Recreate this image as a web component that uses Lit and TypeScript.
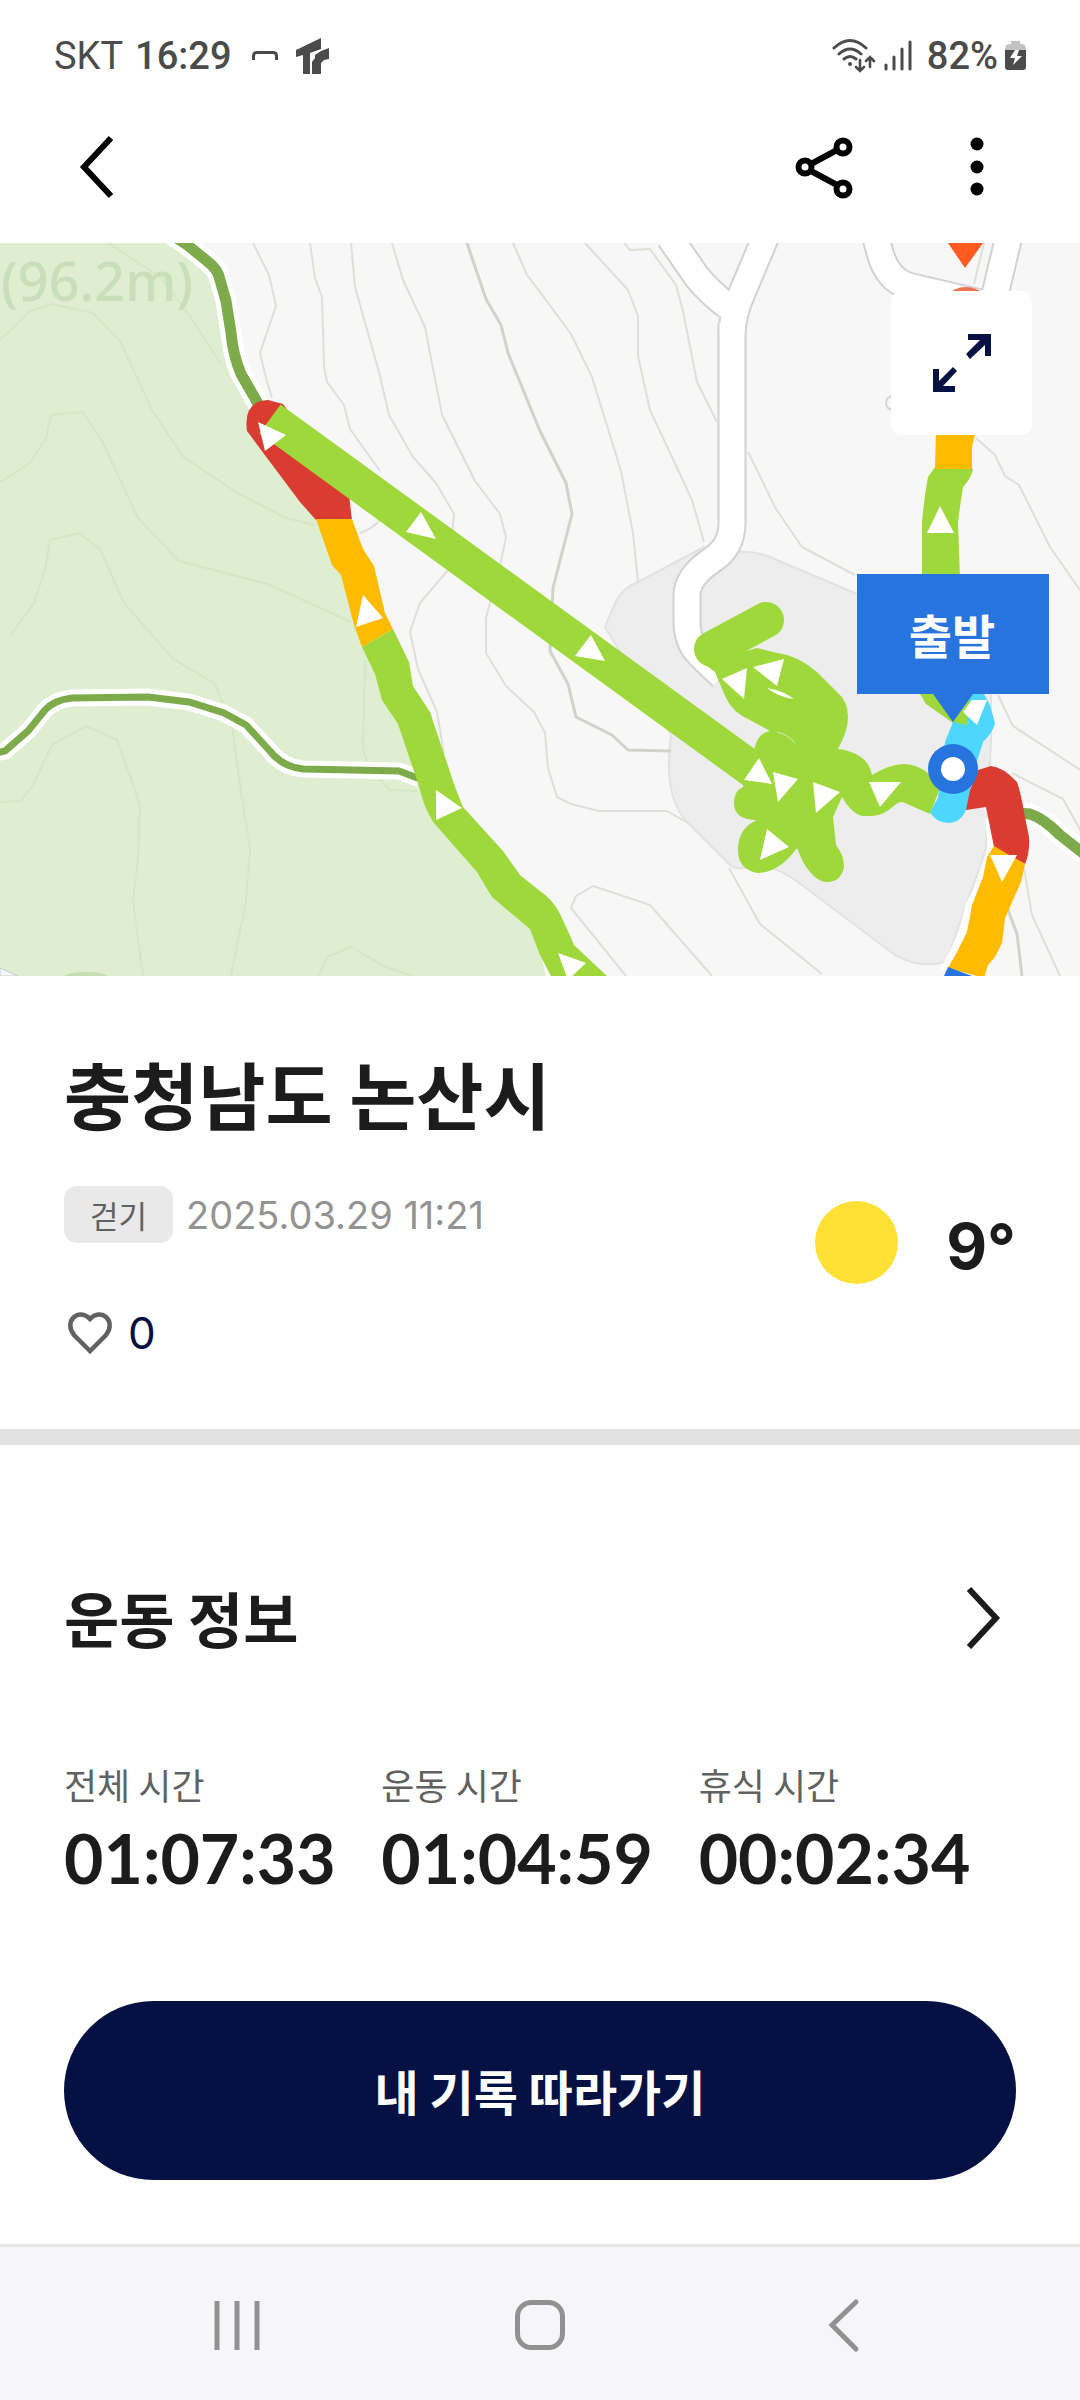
import { LitElement, html, svg, css } from "lit";
import { customElement, property } from "lit/decorators.js";

const FOREST_LINES = [
  "M0 97L21 77L29 68L52 61L93 70L120 98L152 167L183 214L241 252L286 275L315 282",
  "M0 239L29 221L46 195L51 172L83 169L103 200L138 275L179 318L268 341L351 379",
  "M10 393L34 360L45 327L50 297L79 290L100 306L124 360L172 415L215 441L232 483L241 549L250 606L246 658L231 733",
  "M0 559L21 558L34 540L52 502L86 483L117 497L134 544L140 563L138 615L133 658L143 733",
  "M319 733L327 714L351 704L386 724L413 733",
  "M365 417L363 507L368 521L389 547L417 548",
  "M108 0L160 34L190 73L220 120",
];

const CONTOUR_LINES = [
  "M253 0L269 32L276 63L260 110L267 139L272 155",
  "M310 0L315 35L322 54L324 124L327 139L344 162L350 186L380 228",
  "M351 0L355 44L379 129L389 172L413 214L436 240L454 271L448 327L420 360L410 389L418 426L437 469L444 511",
  "M360 290Q372 286 379 278",
  "M392 0L403 37L425 84L442 172L475 238L500 271L506 294L501 318L486 375L486 410L506 443L534 469L545 490L548 525L557 554L571 561L599 568L667 568L688 580",
  "M513 0L527 32L540 49L571 91L592 134L621 228L633 290L638 339",
  "M585 0L628 47L638 73L638 113L650 167L692 257L704 299",
  "M624 0L630 7L650 6L676 42L683 68L697 139L717 179",
  "M748 209L776 266L802 304L855 332",
  "M976 195L995 212L1005 233L1019 242L1050 304L1082 350",
  "M998 452L1013 483L1082 528",
  "M1012 530L1063 556L1082 590",
  "M729 625L760 681L822 731",
  "M626 733L571 665L576 653L593 643L650 662L712 733",
  "M1024 625L1032 672L1060 733",
  "M984 0L974 41",
];

const INDEX_LINES = [
  "M467 0L486 56L501 82L508 110L540 188L566 240L572 271L553 345L550 408L568 441L576 474L612 492L628 507L671 508",
  "M1008 667L1017 691L1022 733",
];

const STREETS = [
  "M670 -5L697 34Q710 50 730 65",
  "M766 -7L742 50Q733 70 732 90",
  "M732 80V280Q732 304 712 317Q687 334 687 352V379Q687 394 694 405Q702 415 722 433",
  "M876 -5L879 6Q886 36 908 43L985 61",
  "M1009 -7L993 60",
];

const TRAILS = [
  { d: "M172 -8L186 1L207 18Q218 26 220 37L226 58L231 90Q233 112 241 131L260 164", width: 11 },
  { d: "M-4 510L5 508L28 488L45 467Q54 457 72 455L148 454L189 459L224 470L246 482L269 507Q282 524 303 526L399 528L420 536", width: 7 },
  { d: "M1015 570L1030 571Q1043 575 1060 592L1084 611", width: 11 },
];

const ARROWS = [
  "258,179 286,192 265,208",
  "421,269 436,296 406,289",
  "591,392 605,418 575,413",
  "363,352 383,375 356,384",
  "436,547 462,565 436,577",
  "558,710 586,720 568,737",
  "940,263 927,290 954,290",
  "963,469 972,457 987,457 977,482",
  "990,612 1017,612 1002,639",
  "722,436 747,425 744,456",
  "753,424 784,416 777,443",
  "759,515 744,537 772,541",
  "773,529 798,536 778,559",
  "813,539 840,549 816,570",
  "869,539 901,539 880,564",
  "767,586 789,604 760,617",
];

@customElement("phone-status")
class PhoneStatus extends LitElement {
  static styles = css`
    :host {
      display: flex;
      justify-content: space-between;
      align-items: center;
      height: 68px;
      padding: 22px 54px 0 54px;
      color: #4b4b4b;
      font: 500 38px/48px Roboto, "Liberation Sans", sans-serif;
    }
    .group {
      display: flex;
      align-items: center;
    }
    .carrier {
      font-weight: 400;
      margin-right: 12px;
    }
    .note {
      width: 26px;
      height: 36px;
      margin: 0 18px 0 20px;
    }
    .brand {
      width: 34px;
      height: 36px;
    }
    .wifi {
      width: 44px;
      height: 36px;
      margin-right: 8px;
    }
    .signal {
      width: 28px;
      height: 36px;
      margin-right: 15px;
    }
    .battery {
      width: 21px;
      height: 36px;
      margin-left: 7px;
    }
  `;

  render() {
    return html`
      <div class="group">
        <span class="carrier">SKT</span>
        <span>16:29</span>
        <svg class="note" viewBox="0 0 26 36" fill="none" stroke="currentColor" stroke-width="3" aria-hidden="true">
          <path d="M1.5 22V18Q1.5 14.5 5 14.5H21Q24.5 14.5 24.5 18V22" />
        </svg>
        <svg class="brand" viewBox="0 0 34 36" fill="currentColor" aria-hidden="true">
          <path d="M0 12L25 0V11L14 15V36H7V17L0 19Z" />
          <path d="M16 36V24L19 20V17L25 13L33 10V21L28 22L25 25V36Z" />
        </svg>
      </div>
      <div class="group">
        <svg class="wifi" viewBox="0 0 44 36" fill="none" stroke="currentColor" stroke-width="3" stroke-linecap="round" aria-hidden="true">
          <path d="M2 10Q18 -5 34 10M7 16Q18 6 29 16M12 21Q18 16 24 21" />
          <circle cx="18" cy="26" r="2" fill="currentColor" stroke="none" />
          <path d="M28 22V32M24 29L28 33L32 29M38 29V19M34 23L38 19L42 23" stroke-width="2.6" />
        </svg>
        <svg class="signal" viewBox="0 0 28 36" stroke="currentColor" stroke-width="3" stroke-linecap="round" aria-hidden="true">
          <path d="M2 27V31M10 19V31M18 11V31M26 4V31" />
        </svg>
        <span>82%</span>
        <svg class="battery" viewBox="0 0 21 36" aria-hidden="true">
          <path d="M6 3H15V6H17Q21 6 21 12H0Q0 6 4 6H6Z" fill="#c2c2c2" />
          <path d="M0 12H21V29Q21 32 18 32H3Q0 32 0 29Z" fill="currentColor" />
          <path d="M10 12H14L12 18H17L8 27L10 20H5Z" fill="#fff" />
        </svg>
      </div>
    `;
  }
}

@customElement("route-map")
class RouteMap extends LitElement {
  static styles = css`
    :host {
      display: block;
      position: relative;
      overflow: hidden;
    }
    .map {
      display: block;
      width: 100%;
      height: auto;
    }
    .peak {
      font: 500 54px "Noto Sans", "Open Sans", sans-serif;
      fill: #c8dfba;
    }
    .flag {
      font: 700 47px "Noto Sans CJK KR", sans-serif;
      fill: #fff;
      text-anchor: middle;
    }
    .expand {
      position: absolute;
      top: 48px;
      right: 48px;
      display: grid;
      place-items: center;
      width: 141px;
      height: 144px;
      padding: 0;
      border: 0;
      border-radius: 11px;
      background: #fff;
      color: #051142;
    }
    .expand svg {
      width: 62px;
      height: 60px;
    }
  `;

  render() {
    return html`
      <svg class="map" viewBox="0 0 1080 733" role="img" aria-label="이동 경로 지도">
        <rect width="1080" height="733" fill="#f7f7f7" />
        <path d="M0 0H183L215 30L226 60L233 110L262 166L262 200L335 280L375 400L440 560L535 690L546 733H0Z" fill="#dfedd0" />
        <g fill="none" stroke="#d4e7c6" stroke-width="2">${FOREST_LINES.map((d) => svg`<path d=${d} />`)}</g>
        <ellipse cx="86" cy="734" rx="22" ry="5" fill="#c5dfb2" />
        <path d="M0 725L18 733H0Z" fill="#f7f7f7" stroke="#c9c9c9" />
        <text class="peak" x="1" y="58">(96.2m)</text>
        <path
          d="M704 304L638 339Q622 345 615 360L605 384L671 492Q666 530 673 554Q678 570 688 580L729 621Q734 626 742 625H768Q778 625 798 639L895 712Q919 726 946 719L986 606L991 497V400L857 351L770 314Q750 306 730 310Z"
          fill="#ededed" stroke="#e2e2e2" stroke-width="2"
        />
        <g fill="none" stroke="#dfdfd9" stroke-width="2" stroke-linejoin="round">${CONTOUR_LINES.map((d) => svg`<path d=${d} />`)}</g>
        <g fill="none" stroke="#d0d3cc" stroke-width="3" stroke-linejoin="round">${INDEX_LINES.map((d) => svg`<path d=${d} />`)}</g>
        <circle cx="893" cy="160" r="7" fill="none" stroke="#d5d5d5" stroke-width="2" />
        <g fill="none" stroke="#d2d2d2" stroke-width="29">${STREETS.map((d) => svg`<path d=${d} />`)}</g>
        <g fill="none" stroke="#fff" stroke-width="25">${STREETS.map((d) => svg`<path d=${d} />`)}</g>
        ${TRAILS.map(
          (t) => svg`
            <path d=${t.d} fill="none" stroke="#fff" stroke-width=${t.width + 10} />
            <path d=${t.d} fill="none" stroke="#7dab4b" stroke-width=${t.width} />
          `,
        )}
        <path d="M948 0H983L965 25Z" fill="#ff5a1f" />
        <circle cx="966" cy="72" r="28" fill="#ee7355" />

        <path d="M247 188Q243 158 268 157L283 161L349 252L352 277L316 277L300 259Z" fill="#da3c32" />
        <path d="M316 276H352L363 306L374 323L385 370L393 386L362 404L354 382L341 332L332 322Z" fill="#ffbb00" />
        <path
          d="M393 386L409 419L413 443L430 469L444 511L455 544L463 564L503 608L520 632L540 648Q552 656 559 669L568 688L574 702L609 735H552L540 712L530 686L492 654L477 629L434 580Q426 568 422 554L417 537L398 481L382 457L375 431L362 404Z"
          fill="#9fd83a"
        />
        <path d="M922 335V280Q924 255 928 234L935 224L973 226Q972 234 963 244Q960 262 958 280L960 335Z" fill="#9fd83a" />
        <path d="M936 188H976L972 204V226H935Z" fill="#ffbb00" />
        <path d="M270 176L757 530" stroke="#9fd83a" stroke-width="36" />
        <path d="M766 377L712 406" stroke="#9fd83a" stroke-width="36" stroke-linecap="round" />
        <path
          d="M757 405L777 410Q797 412 817 429L837 449Q848 458 848 474Q848 488 838 506Q868 510 872 532Q890 521 905 521Q928 523 940 545L930 571L905 560Q900 557 895 562Q883 573 872 573H862Q851 570 842 554L833 574L836 602Q844 612 844 624Q841 639 827 639Q815 639 803 619L797 605Q779 630 757 630Q738 626 738 607Q738 585 757 577Q734 577 734 560Q734 548 743 544L755 504Q758 490 770 488L750 477Q733 470 726 455L715 429L703 420Z"
          fill="#9fd83a"
        />
        <path d="M767 445Q782 447 794 456Q778 454 767 445Z" fill="#fff" />
        <path d="M777 489Q787 491 795 500" fill="none" stroke="#d9e9bf" stroke-width="1" />
        <path d="M920 451L926 461L953 480L960 483L967 482L976 451Z" fill="#9fd83a" />
        <path
          d="M970 451H984L990 462L995 480Q994 488 983 499L975 525L970 547Q968 580 948 580Q935 579 930 569L938 555L942 520L945 499L953 479L967 482Z"
          fill="#4dd6ff"
        />
        <path d="M989 575L991 606L984 634L969 662L963 689L944 727" fill="none" stroke="#fff" stroke-width="7" />
        <path
          d="M978 527L991 523Q1003 524 1017 539Q1021 550 1025 574L1029 594Q1030 610 1025 621L994 604L986 564L966 567L970 547Z"
          fill="#da3c32"
        />
        <path d="M994 603L1025 621L1021 639L1005 675L1002 700L995 714L988 722L984 735L948 725L957 709L967 689L972 662L983 634L987 614Z" fill="#ffbb00" />
        <path d="M948 724L972 733H944Z" fill="#2874df" />
        <g fill="#fff">${ARROWS.map((p) => svg`<polygon points=${p} />`)}</g>

        <path d="M857 331H1049V451H973L953 479L933 451H857Z" fill="#2874df" />
        <text class="flag" x="952" y="411">출발</text>
        <circle cx="953" cy="526" r="25" fill="#2874df" />
        <circle cx="953" cy="526" r="12" fill="#fff" />
      </svg>
      <button class="expand" type="button" aria-label="지도 확대">
        <svg viewBox="0 0 62 60" fill="currentColor" aria-hidden="true">
          <path d="M37 1H60V23H54V12L39 26L35 21L49 7H37Z" />
          <path d="M2 59V36H8V48L22 34L26 38L12 53H24V59Z" />
        </svg>
      </button>
    `;
  }
}

@customElement("stat-item")
class StatItem extends LitElement {
  @property() label = "";
  @property() value = "";

  static styles = css`
    :host {
      display: block;
    }
    .label {
      margin: 0;
      color: #616161;
      font: 400 36px/48px "Noto Sans CJK KR", sans-serif;
    }
    .value {
      margin: 10px 0 0;
      color: #1c1c1c;
      font: 700 68px/80px Lato, "Noto Sans CJK KR", sans-serif;
    }
  `;

  render() {
    return html`
      <p class="label">${this.label}</p>
      <p class="value">${this.value}</p>
    `;
  }
}

@customElement("app-root")
class AppRoot extends LitElement {
  static styles = css`
    :host {
      display: flex;
      flex-direction: column;
      min-height: 100vh;
      background: #fff;
      color: #1c1c1c;
      font-family: Inter, "Noto Sans CJK KR", sans-serif;
    }
    button {
      padding: 0;
      border: 0;
      background: none;
      color: inherit;
      font: inherit;
    }
    svg {
      display: block;
    }
    .appbar {
      display: flex;
      align-items: center;
      gap: 88px;
      height: 153px;
      padding: 0 72px 0 64px;
      color: #000;
    }
    .icon {
      width: 64px;
      height: 64px;
    }
    .back {
      margin-right: auto;
    }
    .summary {
      padding: 68px 64px 70px;
      border-bottom: 16px solid #e2e2e2;
    }
    .title {
      margin: 0 0 46px;
      font: 700 73px/96px "Noto Sans CJK KR", sans-serif;
    }
    .meta {
      display: flex;
      justify-content: space-between;
      align-items: flex-start;
    }
    .facts {
      display: grid;
      gap: 64px;
    }
    .tagline {
      display: flex;
      align-items: center;
      gap: 13px;
    }
    .tag {
      padding: 0 26px;
      border-radius: 13px;
      background: #e9e9e9;
      color: #616161;
      font: 400 31px/57px "Noto Sans CJK KR", sans-serif;
    }
    .date {
      color: #939393;
      font-size: 38px;
      line-height: 48px;
    }
    .like {
      display: flex;
      align-items: center;
      gap: 14px;
      justify-self: start;
      color: #051142;
      font-size: 44px;
      line-height: 52px;
    }
    .heart {
      width: 50px;
      height: 50px;
    }
    .weather {
      display: flex;
      align-items: flex-start;
      gap: 48px;
      margin-top: 15px;
      font-size: 63px;
      font-weight: 700;
      line-height: 90px;
    }
    .sun {
      width: 83px;
      height: 83px;
      border-radius: 50%;
      background: #ffe136;
    }
    .workout {
      padding: 132px 64px 64px;
    }
    .heading {
      display: flex;
      justify-content: space-between;
      align-items: center;
      margin-bottom: 103px;
    }
    .subtitle {
      margin: 0;
      font: 700 60px/80px "Noto Sans CJK KR", sans-serif;
    }
    .stats {
      display: grid;
      grid-template-columns: repeat(3, 1fr);
    }
    .follow {
      display: block;
      width: 100%;
      margin-top: 103px;
      padding: 54px 0;
      border-radius: 90px;
      background: #051142;
      color: #fff;
      font: 700 48px/71px "Noto Sans CJK KR", sans-serif;
    }
    .navbar {
      display: grid;
      grid-template-columns: repeat(3, 1fr);
      justify-items: center;
      align-items: center;
      height: 153px;
      margin-top: auto;
      padding: 0 86px;
      border-top: 3px solid #e8e8e8;
      background: #f6f6f8;
      color: #919191;
    }
  `;

  render() {
    return html`
      <phone-status></phone-status>
      <header class="appbar">
        <button class="back" type="button" aria-label="뒤로">
          <svg class="icon" viewBox="0 0 64 64" fill="none" stroke="#000" stroke-width="6"><path d="M47 3L20 32L47 61" /></svg>
        </button>
        <button type="button" aria-label="공유">
          <svg class="icon" viewBox="0 0 64 64" fill="none" stroke="#000" stroke-width="6">
            <circle cx="13" cy="32" r="6.5" />
            <circle cx="51" cy="12" r="6.5" />
            <circle cx="51" cy="54" r="6.5" />
            <path d="M19 29L45 15M19 36L45 50" />
          </svg>
        </button>
        <button type="button" aria-label="더보기">
          <svg class="icon" viewBox="0 0 64 64" fill="#000">
            <circle cx="33" cy="9" r="6.5" />
            <circle cx="33" cy="32" r="6.5" />
            <circle cx="33" cy="54" r="6.5" />
          </svg>
        </button>
      </header>
      <route-map></route-map>
      <section class="summary">
        <h1 class="title">충청남도 논산시</h1>
        <div class="meta">
          <div class="facts">
            <div class="tagline">
              <span class="tag">걷기</span>
              <time class="date" datetime="2025-03-29T11:21">2025.03.29 11:21</time>
            </div>
            <button class="like" type="button" aria-label="좋아요 0">
              <svg class="heart" viewBox="0 0 50 50" fill="none" stroke="#616161" stroke-width="4.5">
                <path d="M26 43L10 27C-1 13 15 -1 26 11C37 -1 53 13 42 27Z" />
              </svg>
              <span>0</span>
            </button>
          </div>
          <div class="weather">
            <span class="sun"></span>
            <span>9°</span>
          </div>
        </div>
      </section>
      <section class="workout">
        <div class="heading">
          <h2 class="subtitle">운동 정보</h2>
          <button type="button" aria-label="운동 정보 더보기">
            <svg class="icon" viewBox="0 0 64 64" fill="none" stroke="#1c1c1c" stroke-width="6"><path d="M17 4L44 33L17 62" /></svg>
          </button>
        </div>
        <div class="stats">
          <stat-item label="전체 시간" value="01:07:33"></stat-item>
          <stat-item label="운동 시간" value="01:04:59"></stat-item>
          <stat-item label="휴식 시간" value="00:02:34"></stat-item>
        </div>
        <button class="follow" type="button">내 기록 따라가기</button>
      </section>
      <nav class="navbar" aria-label="시스템 탐색">
        <button type="button" aria-label="최근 앱">
          <svg class="icon" viewBox="0 0 64 64" fill="none" stroke="currentColor" stroke-width="5"><path d="M12 9V58M32 9V58M52 9V58" /></svg>
        </button>
        <button type="button" aria-label="홈">
          <svg class="icon" viewBox="0 0 64 64" fill="none" stroke="currentColor" stroke-width="5"><rect x="9.5" y="10.5" width="45" height="45" rx="14" /></svg>
        </button>
        <button type="button" aria-label="뒤로 가기">
          <svg class="icon" viewBox="0 0 64 64" fill="none" stroke="currentColor" stroke-width="5" stroke-linecap="round"><path d="M45 10L21 33L45 57" /></svg>
        </button>
      </nav>
    `;
  }
}
